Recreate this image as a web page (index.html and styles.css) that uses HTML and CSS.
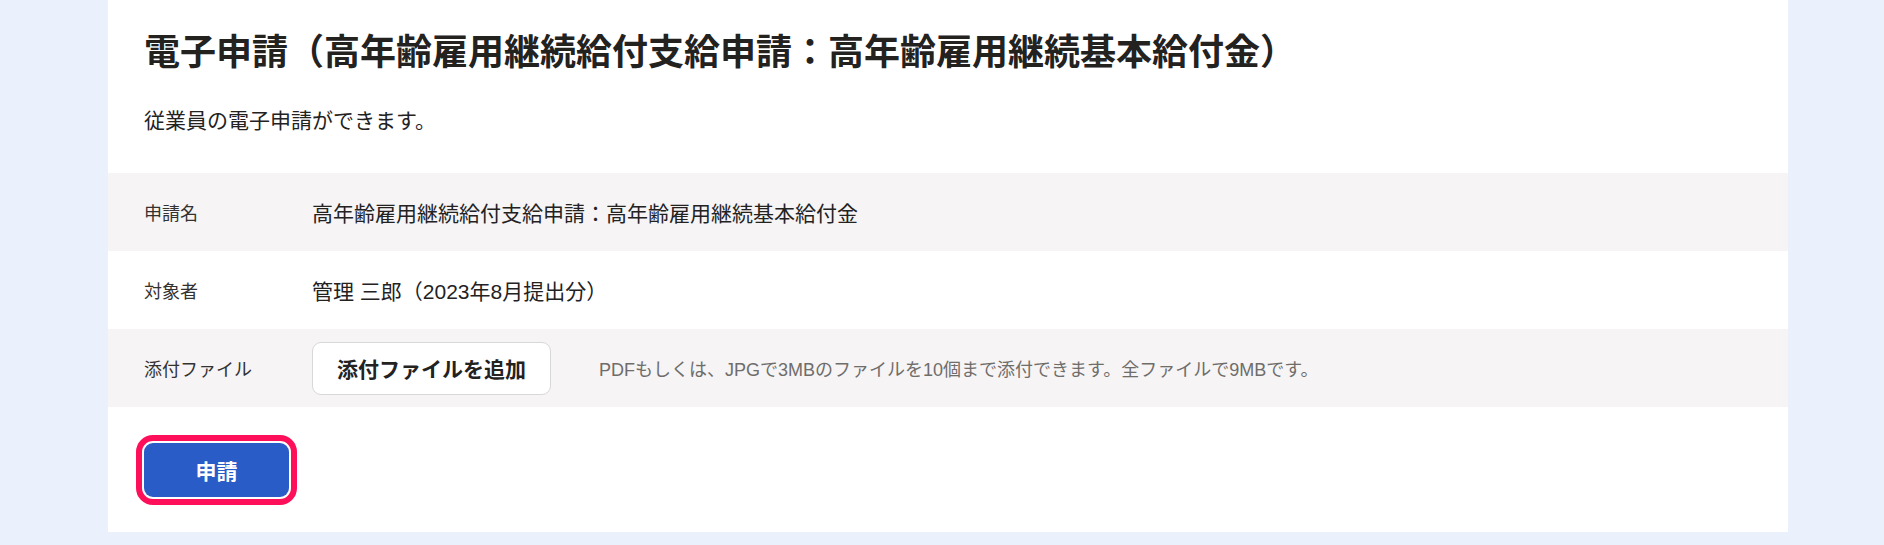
FILE: index.html
```html
<!DOCTYPE html>
<html lang="ja">
<head>
<meta charset="utf-8">
<title>電子申請</title>
<link rel="stylesheet" href="styles.css">
</head>
<body>
<main class="panel">
  <header class="head">
    <h1 class="title">電子申請（高年齢雇用継続給付支給申請：高年齢雇用継続基本給付金）</h1>
    <p class="lead">従業員の電子申請ができます。</p>
  </header>
  <div class="table">
    <div class="row alt">
      <div class="label">申請名</div>
      <div class="value">高年齢雇用継続給付支給申請：高年齢雇用継続基本給付金</div>
    </div>
    <div class="row">
      <div class="label">対象者</div>
      <div class="value">管理 三郎（2023年8月提出分）</div>
    </div>
    <div class="row alt">
      <div class="label">添付ファイル</div>
      <div class="value file">
        <button class="btn-add" type="button">添付ファイルを追加</button>
        <span class="note">PDFもしくは、JPGで3MBのファイルを10個まで添付できます。全ファイルで9MBです。</span>
      </div>
    </div>
  </div>
  <div class="actions">
    <button class="btn-submit" type="button">申請</button>
  </div>
</main>
</body>
</html>
```

FILE: styles.css
```css
* { box-sizing: border-box; }
html, body { margin: 0; padding: 0; }
body {
  background: #ebf1fc;
  font-family: "Liberation Sans", "Noto Sans CJK JP", sans-serif;
  color: #23221f;
  height: 545px;
  overflow: hidden;
}
.panel {
  margin-left: 108px;
  width: 1680px;
  background: #ffffff;
  padding-top: 26px;
}
.head { padding: 0 36px; }
.title {
  margin: 0;
  font-size: 36px;
  line-height: 54px;
  font-weight: 700;
  color: #23221f;
}
.lead {
  margin: 25px 0 0;
  font-size: 21px;
  line-height: 32px;
  color: #23221f;
}
.table { margin-top: 36px; }
.row {
  display: grid;
  grid-template-columns: 168px 1fr;
  align-items: center;
  height: 78px;
  padding-left: 36px;
}
.row.alt { background: #f6f4f5; }
.label {
  font-size: 18px;
  color: #333231;
}
.value {
  font-size: 21px;
  color: #23221f;
}
.file {
  display: flex;
  align-items: center;
  gap: 48px;
}
.btn-add {
  width: 239px;
  height: 53px;
  padding: 0;
  border: 1px solid #d9d8d8;
  border-radius: 9px;
  background: #ffffff;
  font-family: inherit;
  font-size: 21px;
  font-weight: 700;
  color: #23221f;
}
.note {
  font-size: 18px;
  color: #6f6d6a;
}
.actions {
  padding: 36px 36px 35px;
}
.btn-submit {
  display: block;
  width: 145px;
  height: 54px;
  padding: 0;
  border: none;
  border-radius: 9px;
  background: #2a5cc8;
  color: #ffffff;
  font-family: inherit;
  font-size: 21px;
  font-weight: 700;
  outline: 6px solid #fe0f5a;
  outline-offset: 2px;
}
```
